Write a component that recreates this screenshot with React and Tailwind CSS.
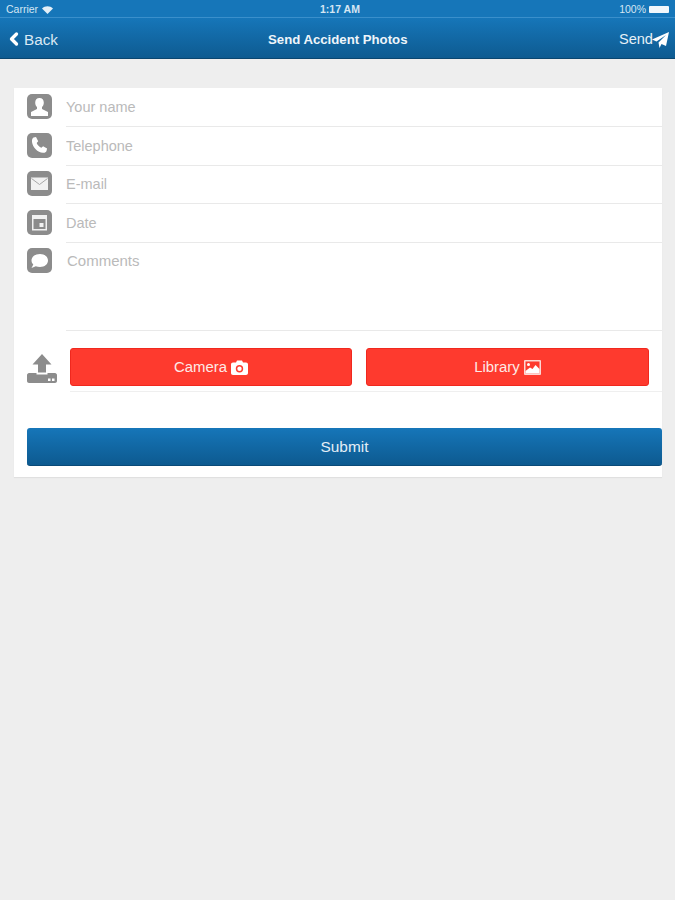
import React from 'react';
import { ChevronLeft } from 'lucide-react';

const UserGlyph = () => (
  <path d="M12.500 4c-2.800 0-4.300 2.100-4.300 4.700 0 1.800.7 3.400 1.800 4.400v2L4 18v4h17v-4l-6-2.900v-2c1.100-1 1.800-2.600 1.800-4.400C16.800 6.100 15.300 4 12.500 4z" fill="#fff" />
);

const PhoneGlyph = () => (
  <path d="M6.500 4.500 9 4l2.200 4.200-1.500 1.700c.6 1.900 2.600 4 4.700 4.800l1.700-1.500 4 2.300-.6 2.500c-.5 1.300-2 2-3.500 1.700C10.500 19.500 5.800 14.500 5 9c-.2-1.900.300-3.700 1.500-4.500z" fill="#fff" />
);

const MailGlyph = () => (
  <g>
    <rect x="4" y="6.500" width="17" height="12.500" fill="#f1f1f1" />
    <path d="M4.500 7.500 12.500 13.500 20.500 7.500" fill="none" stroke="#a8a8a8" strokeWidth="1" />
  </g>
);

const CalendarGlyph = () => (
  <g>
    <rect x="5" y="5" width="15" height="15.500" fill="#f1f1f1" />
    <rect x="6.500" y="9" width="12" height="10" fill="#8c8c8c" />
    <rect x="12.500" y="13" width="4" height="4" fill="#f1f1f1" />
  </g>
);

const BubbleGlyph = () => (
  <path d="M13 6C8.200 6 4.500 8.800 4.500 12.500c0 1.500.6 2.900 1.800 4L4.500 20l4.300-1.700c1.300.4 2.700.7 4.200.7 4.800 0 8-2.900 8-6.500S17.800 6 13 6z" fill="#fff" />
);

const fields = [
  { label: 'Your name', type: 'text', glyph: <UserGlyph /> },
  { label: 'Telephone', type: 'tel', glyph: <PhoneGlyph /> },
  { label: 'E-mail', type: 'email', glyph: <MailGlyph /> },
  { label: 'Date', type: 'text', glyph: <CalendarGlyph /> },
];

const IconTile = ({ children, className }) => (
  <svg width="25" height="25" viewBox="0 0 25 25" className={`shrink-0 rounded-[5px] bg-[#8c8c8c] ${className}`}>
    {children}
  </svg>
);

const App = () => {
  return (
    <div className="min-h-[900px] bg-[#eeeeee] font-['Liberation_Sans',Arial,sans-serif]">
      <div className="relative flex h-[18px] items-center justify-between border-b border-[#3a8fcb] bg-[#1676b9] px-[6px] pt-[2px] text-[#d5e6f3]">
        <div className="flex items-center gap-1 text-[10.500px]">
          Carrier
          <svg width="11" height="8" viewBox="0 0 11 8">
            <path d="M0 2.500C3 -.5 8 -.5 11 2.500L5.500 8z" fill="#e4eff7" />
          </svg>
        </div>
        <div className="absolute left-[320px] text-[10.500px] font-bold">1:17 AM</div>
        <div className="flex items-center gap-[3px] text-[10.500px]">
          100%
          <span className="h-[7px] w-[20px] rounded-[1px] bg-[#f2f7fb]" />
        </div>
      </div>

      <div className="relative flex h-[41px] items-center justify-between border-b border-[#0a4670] bg-gradient-to-b from-[#1676b9] to-[#0e5b91] pr-[6px] pt-[4px] text-white">
        <div className="flex items-center pl-[4px] text-[15.300px] text-[#dbe9f4]">
          <ChevronLeft size={20} strokeWidth={4} className="mt-[-2px] text-white" />
          <span>Back</span>
        </div>
        <div className="absolute left-[268px] text-[13.200px] font-bold text-[#eef5fa]">Send Accident Photos</div>
        <div className="flex items-center text-[14.600px] text-[#e6f0f7]">
          Send
          <svg width="17" height="16" viewBox="0 0 17 16" className="ml-[-1px]">
            <path d="M17 0 14 14 9.500 12 7.500 16 6.500 10.500 14 3 4.500 9.500 0 7.500z" fill="#fff" />
          </svg>
        </div>
      </div>

      <div className="ml-[14px] mr-[13px] mt-[29px] h-[389px] bg-white pl-[13px] pt-[0.500px] shadow-[0_1px_1px_rgba(0,0,0,0.06)]">
        {fields.map((field) => (
          <div key={field.label} className="flex h-[38.500px] items-center">
            <IconTile className="mt-[-2px]">{field.glyph}</IconTile>
            <input
              type={field.type}
              placeholder={field.label}
              className="ml-[14px] h-full w-full border-b border-[#e9e9e9] text-[14.500px] outline-none placeholder:text-[#bababa]"
            />
          </div>
        ))}

        <div className="flex h-[88.500px] items-start pt-[5.500px]">
          <IconTile><BubbleGlyph /></IconTile>
          <textarea
            placeholder="Comments"
            className="ml-[14px] mt-[-5.500px] h-[88.500px] w-full resize-none border-b border-[#e9e9e9] pl-[1px] pt-[7.500px] text-[15px] outline-none placeholder:text-[#bababa]"
          />
        </div>

        <div className="flex h-[61px] items-center">
          <svg width="30" height="30" viewBox="0 0 30 30" className="mt-[15px] shrink-0">
            <path d="M15 0 24.500 10.500H19V18.500H11V10.500H5.500z" fill="#8c8c8c" />
            <path d="M2 19H9.500V20.500H20.500V19H28C29 19 30 20 30 21V27C30 28 29 29 28 29H2C1 29 0 28 0 27V21C0 20 1 19 2 19z" fill="#8c8c8c" />
            <rect x="21" y="24.500" width="2.500" height="2.500" fill="#fff" />
            <rect x="25" y="24.500" width="2.500" height="2.500" fill="#fff" />
          </svg>
          <div className="ml-[13px] flex h-full flex-1 items-start border-b border-[#efefef] pt-[17px]">
            <button className="flex h-[38px] w-[282px] items-center justify-center gap-[4px] rounded-[3px] border border-[#f0281e] bg-[#fe3a2e] text-[14.900px] text-[#fde9e6]">
              Camera
              <svg width="17" height="15" viewBox="0 0 17 15">
                <path d="M2 2.500H5L6 .5H11L12 2.500H15C16.200 2.500 17 3.300 17 4.500V13C17 14.200 16.200 15 15 15H2C.8 15 0 14.200 0 13V4.500C0 3.300.8 2.500 2 2.500z" fill="#fff" />
                <circle cx="8.500" cy="8.700" r="3.700" fill="#fe3a2e" />
                <circle cx="8.500" cy="8.700" r="2.200" fill="#fff" />
              </svg>
            </button>
            <button className="ml-[14px] flex h-[38px] w-[283px] items-center justify-center gap-[4px] rounded-[3px] border border-[#f0281e] bg-[#fe3a2e] text-[14.900px] text-[#fde9e6]">
              Library
              <svg width="17" height="15" viewBox="0 0 17 15">
                <rect width="17" height="15" rx="1" fill="#fdd7d3" />
                <rect x="1.500" y="1.500" width="14" height="12" fill="#fe3a2e" />
                <circle cx="4.500" cy="4.500" r="1.500" fill="#fff" />
                <path d="M1.500 13.500V11L6 7.500 8.500 9 11.500 5 15.500 9V13.500z" fill="#fff" />
              </svg>
            </button>
          </div>
        </div>

        <button className="mt-[36px] h-[38px] w-full rounded-[3px] border-b border-[#0a4a78] bg-gradient-to-b from-[#1676b9] to-[#0d5a90] text-[15.400px] text-[#e3eef6]">
          Submit
        </button>
      </div>
    </div>
  );
};

export default App;
